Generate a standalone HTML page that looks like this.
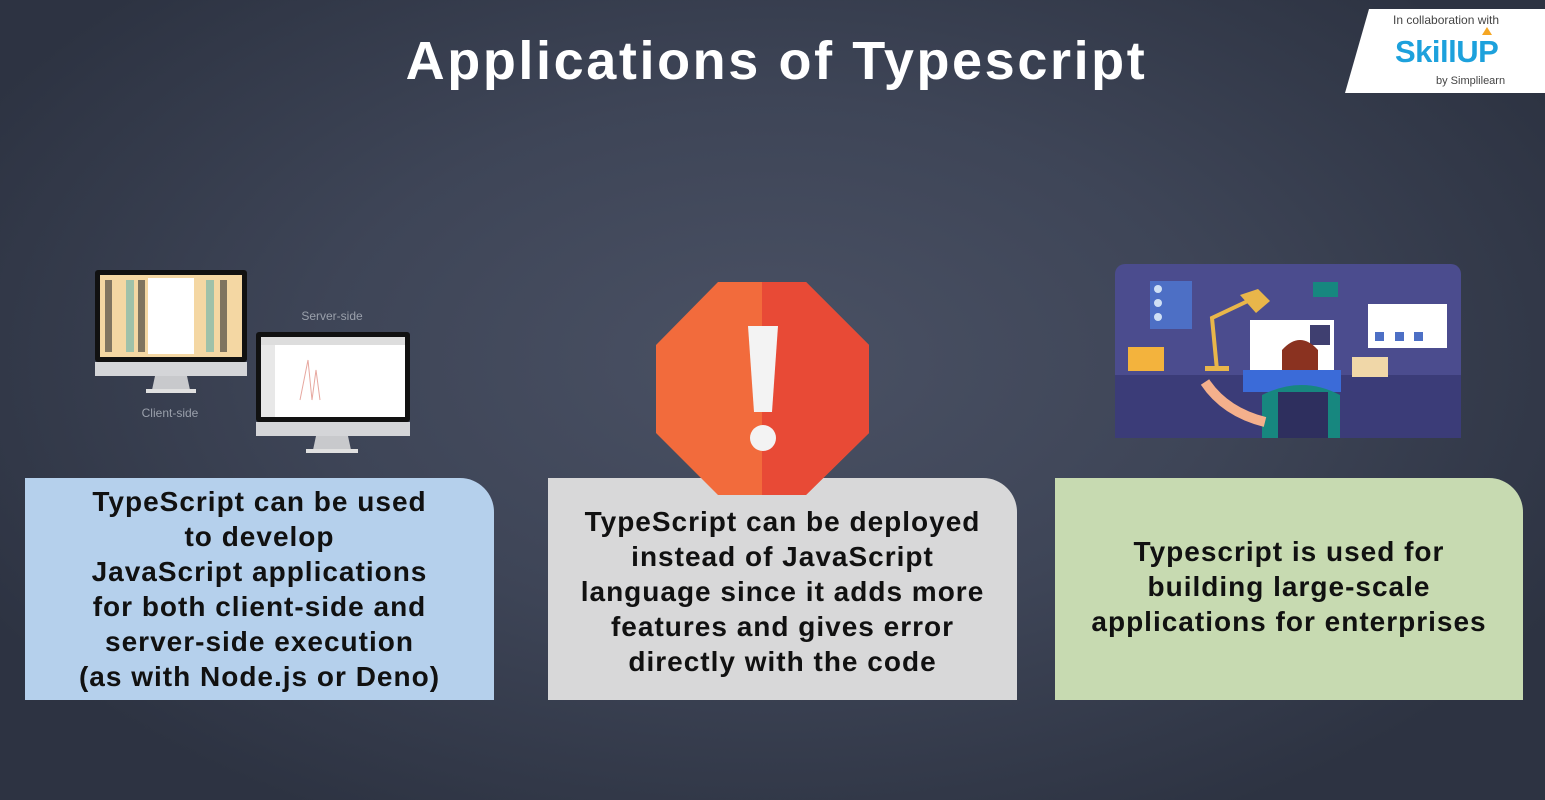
<!DOCTYPE html>
<html><head><style>
html,body{margin:0;padding:0}
body{width:1545px;height:800px;overflow:hidden;position:relative;font-family:"Liberation Sans",sans-serif;
background:radial-gradient(ellipse 900px 520px at 770px 360px,#4a5164 0%,#3e4557 50%,#2d3342 100%);}
.title{position:absolute;top:30px;left:0;width:1553px;text-align:center;color:#fff;font-weight:bold;font-size:54px;letter-spacing:2.6px}
.logo{position:absolute;left:1345px;top:9px;width:200px;height:84px;background:#fff;clip-path:polygon(24px 0,200px 0,200px 84px,0 84px)}
.box{position:absolute;top:478px;height:222px;box-sizing:border-box;border-top-right-radius:34px;display:flex;align-items:center;justify-content:center;text-align:center;font-weight:bold;font-size:28px;line-height:35px;color:#111;letter-spacing:1px}
</style></head><body>
<div class="title">Applications of Typescript</div>
<div class="logo">
 <div style="position:absolute;left:48px;top:4px;font-size:12px;color:#444">In collaboration with</div>
 <div style="position:absolute;left:50px;top:25px;font-size:31px;font-weight:bold;color:#1da1dc;letter-spacing:-0.5px">SkillUP</div>
 <div style="position:absolute;left:137px;top:18px;width:0;height:0;border-left:5px solid transparent;border-right:5px solid transparent;border-bottom:8px solid #f5a623"></div>
 <div style="position:absolute;left:91px;top:66px;font-size:11px;color:#444">by Simplilearn</div>
</div>

<svg style="position:absolute;left:0;top:0" width="1545" height="800">
 <rect x="95" y="270" width="152" height="92" rx="3" fill="#111"/>
 <rect x="100" y="275" width="142" height="82" fill="#f4d7a3"/>
 <rect x="148" y="278" width="46" height="76" fill="#fff"/>
 <g fill="#7cb8ac" opacity="0.7"><rect x="126" y="280" width="8" height="72"/><rect x="206" y="280" width="8" height="72"/></g>
 <g fill="#333" opacity="0.6"><rect x="138" y="280" width="7" height="72"/><rect x="220" y="280" width="7" height="72"/><rect x="105" y="280" width="7" height="72"/></g>
 <rect x="95" y="362" width="152" height="14" fill="#d4d5d8"/>
 <path d="M155 376h32l3 14h-38z" fill="#c8c9cc"/>
 <rect x="146" y="389" width="50" height="4" fill="#e0e0e0"/>
 <text x="170" y="417" font-size="12" fill="#9aa0ab" text-anchor="middle" font-family="Liberation Sans">Client-side</text>
 <text x="332" y="320" font-size="12" fill="#9aa0ab" text-anchor="middle" font-family="Liberation Sans">Server-side</text>
 <rect x="256" y="332" width="154" height="90" rx="3" fill="#111"/>
 <rect x="261" y="337" width="144" height="80" fill="#fff"/>
 <rect x="261" y="337" width="144" height="8" fill="#ddd"/>
 <rect x="261" y="345" width="14" height="72" fill="#e8e8e8"/>
 <path d="M300 400 L308 360 L312 400 L316 370 L320 400" stroke="#e7a8a0" fill="none"/>
 <rect x="256" y="422" width="154" height="14" fill="#d4d5d8"/>
 <path d="M316 436h32l3 14h-38z" fill="#c8c9cc"/>
 <rect x="306" y="449" width="52" height="4" fill="#e0e0e0"/>

 <rect x="1115" y="264" width="346" height="174" rx="10" fill="#4b4c8e"/>
 <rect x="1115" y="375" width="346" height="63" fill="#3b3c78"/>
 <rect x="1150" y="281" width="42" height="48" fill="#4d6fc5"/>
 <circle cx="1158" cy="289" r="4" fill="#cfe0f5"/><circle cx="1158" cy="303" r="4" fill="#cfe0f5"/><circle cx="1158" cy="317" r="4" fill="#cfe0f5"/>
 <rect x="1313" y="282" width="25" height="15" fill="#17877f"/>
 <rect x="1128" y="347" width="36" height="24" fill="#f3b33d"/>
 <rect x="1368" y="304" width="79" height="44" fill="#fff"/>
 <rect x="1375" y="332" width="9" height="9" fill="#4d6fc5"/><rect x="1395" y="332" width="9" height="9" fill="#4d6fc5"/><rect x="1414" y="332" width="9" height="9" fill="#4d6fc5"/>
 <path d="M1217 370 L1212 318 L1250 300" stroke="#e9b64a" stroke-width="4" fill="none"/>
 <path d="M1240 295 l18 -6 l12 12 l-14 12z" fill="#e9b64a"/>
 <rect x="1205" y="366" width="24" height="5" fill="#e9b64a"/>
 <rect x="1250" y="320" width="84" height="50" fill="#fff"/>
 <rect x="1310" y="325" width="20" height="20" fill="#3f3f70"/>
 <rect x="1243" y="370" width="98" height="22" fill="#3b6bd8"/>
 <rect x="1352" y="357" width="36" height="20" fill="#f0d7a8"/>
 <path d="M1282 350 q18 -20 36 0 v20 h-36z" fill="#8a3220"/>
 <path d="M1262 395 q40 -20 78 0 v43 h-78z" fill="#17877f"/>
 <rect x="1278" y="392" width="50" height="46" fill="#2e2f5e"/>
 <path d="M1205 382 q20 30 60 40" stroke="#f4b08c" stroke-width="10" fill="none"/>
</svg>

<div class="box" style="left:25px;width:469px;background:#b5d0ec">TypeScript can be used<br>to develop<br>JavaScript applications<br>for both client-side and<br>server-side execution<br>(as with Node.js or Deno)</div>
<div class="box" style="left:548px;width:469px;background:#d8d8d9;padding-top:4px">TypeScript can be deployed<br>instead of JavaScript<br>language since it adds more<br>features and gives error<br>directly with the code</div>
<div class="box" style="left:1055px;width:468px;background:#c7dab1;padding-bottom:6px">Typescript is used for<br>building large-scale<br>applications for enterprises</div>
<svg style="position:absolute;left:0;top:0" width="1545" height="800">
 <polygon points="718,282 806,282 869,345 869,433 806,495 718,495 656,433 656,345" fill="#f26b3c"/>
 <polygon points="762,282 806,282 869,345 869,433 806,495 762,495" fill="#e84a36"/>
 <path d="M748 326 h30 l-6 86 h-18z" fill="#f3f3f3"/>
 <circle cx="763" cy="438" r="13" fill="#f3f3f3"/>
</svg>
</body></html>
